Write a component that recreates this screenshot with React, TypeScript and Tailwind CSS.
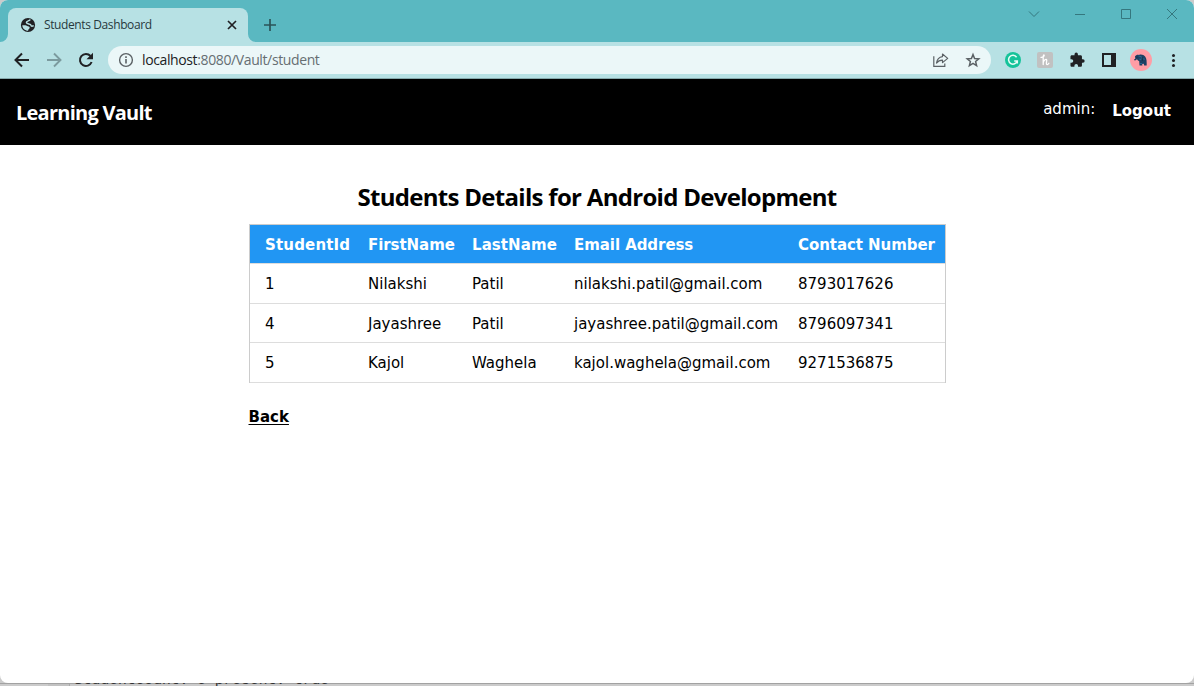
import React from "react";

const students = [
  { id: 1, first: "Nilakshi", last: "Patil", email: "nilakshi.patil@gmail.com", phone: "8793017626" },
  { id: 4, first: "Jayashree", last: "Patil", email: "jayashree.patil@gmail.com", phone: "8796097341" },
  { id: 5, first: "Kajol", last: "Waghela", email: "kajol.waghela@gmail.com", phone: "9271536875" },
];

const columns = "grid grid-cols-[103px_104px_102px_224px_1fr] pt-[2px] pl-[15.5px] items-center";

function TabStrip() {
  return (
    <div className="flex h-[42px] items-end bg-[#5ab8c1] pl-2">
      <div className="relative flex h-[34px] w-[240px] items-center rounded-t-lg bg-[#b7e1e4] pl-[12px] pr-[10px]">
        <svg className="absolute bottom-0 -left-2 h-2 w-2" viewBox="0 0 8 8">
          <path d="M8 0v8H0a8 8 0 0 0 8-8z" fill="#b7e1e4" />
        </svg>
        <svg className="absolute bottom-0 -right-2 h-2 w-2" viewBox="0 0 8 8">
          <path d="M0 0v8h8a8 8 0 0 1-8-8z" fill="#b7e1e4" />
        </svg>
        <svg className="h-4 w-4 shrink-0" viewBox="0 0 16 16">
          <circle cx="8" cy="8" r="7.1" fill="#202124" />
          <path d="M10.200 2.500C9.600 4.200 6.400 3.600 6.400 5.600c0 1.800 4.400 1 4.600 2.700.1 1.200 1.400.9 2.700.3" fill="none" stroke="#b7e1e4" strokeWidth="1.500" />
          <path d="M2.300 8.200c1.600.1 3.400-.2 4.500.6 1.200.9 3.100.6 2.900 2-.2 1.200-1.300 1-1.600 2.900C5 13.700 2.400 11.400 2.300 8.200z" fill="#b7e1e4" />
        </svg>
        <span className="ml-2 text-[12px] tracking-[-0.39px] whitespace-nowrap text-[#27393e]">Students Dashboard</span>
        <svg className="ml-auto h-3 w-3" viewBox="0 0 12 12" stroke="#202124" strokeWidth="1.7">
          <path d="M2 2l8 8M10 2l-8 8" />
        </svg>
      </div>
      <svg className="mb-[11px] ml-[16px] h-3 w-3" viewBox="0 0 12 12" stroke="#2b5358" strokeWidth="1.7">
        <path d="M6 0v12M0 6h12" />
      </svg>
      <div className="mb-[22px] ml-auto flex gap-[34px] pr-4">
        <svg className="h-3 w-3" viewBox="0 0 12 12" fill="none" stroke="#35777e"><path d="M1 3.500l5 5 5-5" /></svg>
        <svg className="h-3 w-3" viewBox="0 0 12 12" fill="none" stroke="#35777e"><path d="M1 6.500h10" /></svg>
        <svg className="h-3 w-3" viewBox="0 0 12 12" fill="none" stroke="#35777e"><path d="M1.500 1.500h9v9h-9z" /></svg>
        <svg className="h-3 w-3" viewBox="0 0 12 12" fill="none" stroke="#35777e"><path d="M1 1l10 10M11 1L1 11" /></svg>
      </div>
    </div>
  );
}

function Toolbar() {
  return (
    <div className="flex h-[37px] items-center border-b border-[#86a9ac] bg-[#b7e1e4] pl-[12px] pr-[11px]">
      <svg className="h-5 w-5" viewBox="0 0 20 20" fill="none" stroke="#202124" strokeWidth="2">
        <path d="M17 10H4M10 3.500L3.500 10l6.500 6.500" />
      </svg>
      <svg className="ml-3 h-5 w-5" viewBox="0 0 20 20" fill="none" stroke="#7b9a9e" strokeWidth="1.900">
        <path d="M3 10h13M10 3.500l6.500 6.500-6.500 6.500" />
      </svg>
      <svg className="ml-3 h-5 w-5" viewBox="0 0 20 20">
        <path d="M15.600 12a6 6 0 1 1-1.100-6" fill="none" stroke="#202124" strokeWidth="2" />
        <path d="M17 2.800v6.500h-6.500z" fill="#202124" />
      </svg>
      <div className="ml-3 flex h-7 w-[883px] items-center rounded-full bg-[#ebf7f8] pl-[10px] pr-[10px]">
        <svg className="h-4 w-4" viewBox="0 0 16 16" fill="none" stroke="#5b6165">
          <circle cx="8" cy="8" r="6.400" strokeWidth="1.400" />
          <path d="M8 7v4.600M8 4.300v1.600" strokeWidth="1.600" />
        </svg>
        <span className="-mt-px ml-2 text-[14px] tracking-[-0.38px] whitespace-nowrap text-[#666e72]">
          <span className="text-[#202124]">localhost</span>:8080/Vault/student
        </span>
        <svg className="ml-auto h-4 w-4" viewBox="0 0 16 16" fill="none" stroke="#5b6165" strokeWidth="1.200">
          <path d="M.8 4.200v10.200h11v-2.800" />
          <path d="M9.500 2l5.200 4.400-5.200 4.200V8.200c-2.700 0-4.400.7-6 2.900.5-3.500 2.300-6 6-6.500z" strokeLinejoin="round" />
        </svg>
        <svg className="ml-4 h-4 w-4" viewBox="0 0 16 16" fill="none" stroke="#5b6165" strokeWidth="1.500">
          <path d="M8 2.600l1.600 3.900 4.200.3-3.200 2.700 1 4.100L8 11.400l-3.600 2.200 1-4.100-3.200-2.700 4.200-.3z" />
        </svg>
      </div>
      <svg className="ml-[14px] h-4 w-4" viewBox="0 0 16 16">
        <circle cx="8" cy="8" r="8" fill="#15c39a" />
        <path d="M11.600 5.200A4.400 4.400 0 1 0 12.200 9H9.200M12.300 8.700v2.800" fill="none" stroke="#eafcf6" strokeWidth="1.500" />
      </svg>
      <svg className="ml-4 h-4 w-4" viewBox="0 0 16 16">
        <rect width="16" height="16" rx="2" fill="#c1c1c1" />
        <path d="M4 5.300C5.300 5.600 7.600 4.400 7.200 3.200 6.800 2.400 6.200 3.500 6.200 5v7.600M6.200 10.500c.6-2.500 3.200-4.200 3.500-2.500.2 1.500-1.100 4.300.3 4.600 1 .2 1.500-.7 1.900-1.400" fill="none" stroke="#fff" strokeWidth="1.300" strokeLinecap="round" />
      </svg>
      <svg className="ml-[15px] h-[18px] w-[18px]" viewBox="0 0 24 24" fill="#202124">
        <path d="M20.500 11H19V7c0-1.100-.9-2-2-2h-4V3.500a2.500 2.500 0 0 0-5 0V5H4c-1.100 0-2 .9-2 2v3.800h1.500a2.700 2.700 0 0 1 0 5.400H2V20c0 1.100.9 2 2 2h3.800v-1.500a2.700 2.700 0 0 1 5.400 0V22H17c1.100 0 2-.9 2-2v-4h1.500a2.500 2.500 0 0 0 0-5z" transform="translate(1.500 1.200) scale(.9)" />
      </svg>
      <svg className="ml-[15px] h-4 w-4" viewBox="0 0 16 16" fill="#202124">
        <path fillRule="evenodd" d="M1 1h14v14H1zM3 3v10h7V3z" />
      </svg>
      <svg className="ml-[13px] h-[22px] w-[22px]" viewBox="0 0 22 22">
        <circle cx="11" cy="11" r="11" fill="#ff9da5" />
        <path d="M5 7.300C6 5.900 7.500 5.300 9 5.900c2-.9 4.800-.2 6.300 1.900 1.500 2 1.400 5.400 1.400 8.600h-2.500l-.5-1.600-1.500.1.200 1.500H9.500l-.3-4.200C8 11.700 7.300 10.900 7 10c-.7 1-1.400 1.700-2.800 1.300v-1l1.100-.6z" fill="#1c4063" />
        <path d="M8.500 7l3 .8-.5 3-1.800-.8M12 9.800l3 .4M10 14.500h2.300" fill="none" stroke="#286d9c" strokeWidth=".8" />
        <path d="M6.500 8.300h.9M12.200 8.300l.2 3.300" fill="none" stroke="#122437" strokeWidth=".8" />
      </svg>
      <svg className="ml-[13px] h-4 w-4" viewBox="0 0 16 16" fill="#202124">
        <circle cx="8.500" cy="3.500" r="1.500" /><circle cx="8.500" cy="8.500" r="1.500" /><circle cx="8.500" cy="13.500" r="1.500" />
      </svg>
    </div>
  );
}

function StudentsTable() {
  return (
    <div className="mt-[9px] border border-b-0 border-[#ccc] text-[15px] whitespace-nowrap">
      <div className={`${columns} h-[39px] border-b border-[#ddd] bg-[#2196f3] font-bold tracking-[-0.06px] text-white`}>
        <span className="tracking-[0.17px]">StudentId</span>
        <span>FirstName</span>
        <span className="tracking-[0.08px]">LastName</span>
        <span>Email Address</span>
        <span>Contact Number</span>
      </div>
      {students.map((s) => (
        <div key={s.id} className={`${columns} h-[39.5px] border-b border-[#ddd]`}>
          <span>{s.id}</span><span>{s.first}</span><span>{s.last}</span><span>{s.email}</span><span>{s.phone}</span>
        </div>
      ))}
    </div>
  );
}

export default function App() {
  return (
    <div className="h-[686px] w-[1194px] overflow-hidden bg-[#cbcbcb] font-['Open_Sans',sans-serif]">
      <div className="h-[683px] overflow-hidden rounded-[8px] bg-white">
        <TabStrip />
        <Toolbar />
        <header className="flex h-[66px] bg-black pr-[23px] pl-4 text-white">
          <h1 className="mt-[20px] text-[20px] leading-[28px] font-bold tracking-[-0.75px]">Learning Vault</h1>
          <div className="ml-auto flex font-['DejaVu_Sans',sans-serif] text-[15px] leading-[22px]">
            <span className="mt-[19px]">admin:</span>
            <a className="mt-[21px] ml-[17px] font-bold">Logout</a>
          </div>
        </header>
        <main className="mx-auto w-[697px] pt-[34px] font-['DejaVu_Sans',sans-serif] text-black">
          <h2 className="text-center font-['Open_Sans',sans-serif] text-[24px] leading-[36px] font-bold tracking-[-0.7px] whitespace-nowrap">
            Students Details for Android Development
          </h2>
          <StudentsTable />
          <a className="mt-[23px] inline-block text-[15px] leading-[23px] font-bold underline underline-offset-2">Back</a>
        </main>
      </div>
      <div className="flex h-[3px] overflow-hidden pl-12 font-['Liberation_Mono',monospace] text-[14.670px] leading-[15px] whitespace-pre text-[#333] shadow-[inset_0_1px_0_#a2a2a2]">
        <span className="mt-px h-[2px] w-[22px] border-r border-[#aaa] bg-[#c2c2c2]" />
        <span className="-mt-[10px] ml-1">StudentCount: 5 present: true</span>
      </div>
    </div>
  );
}
